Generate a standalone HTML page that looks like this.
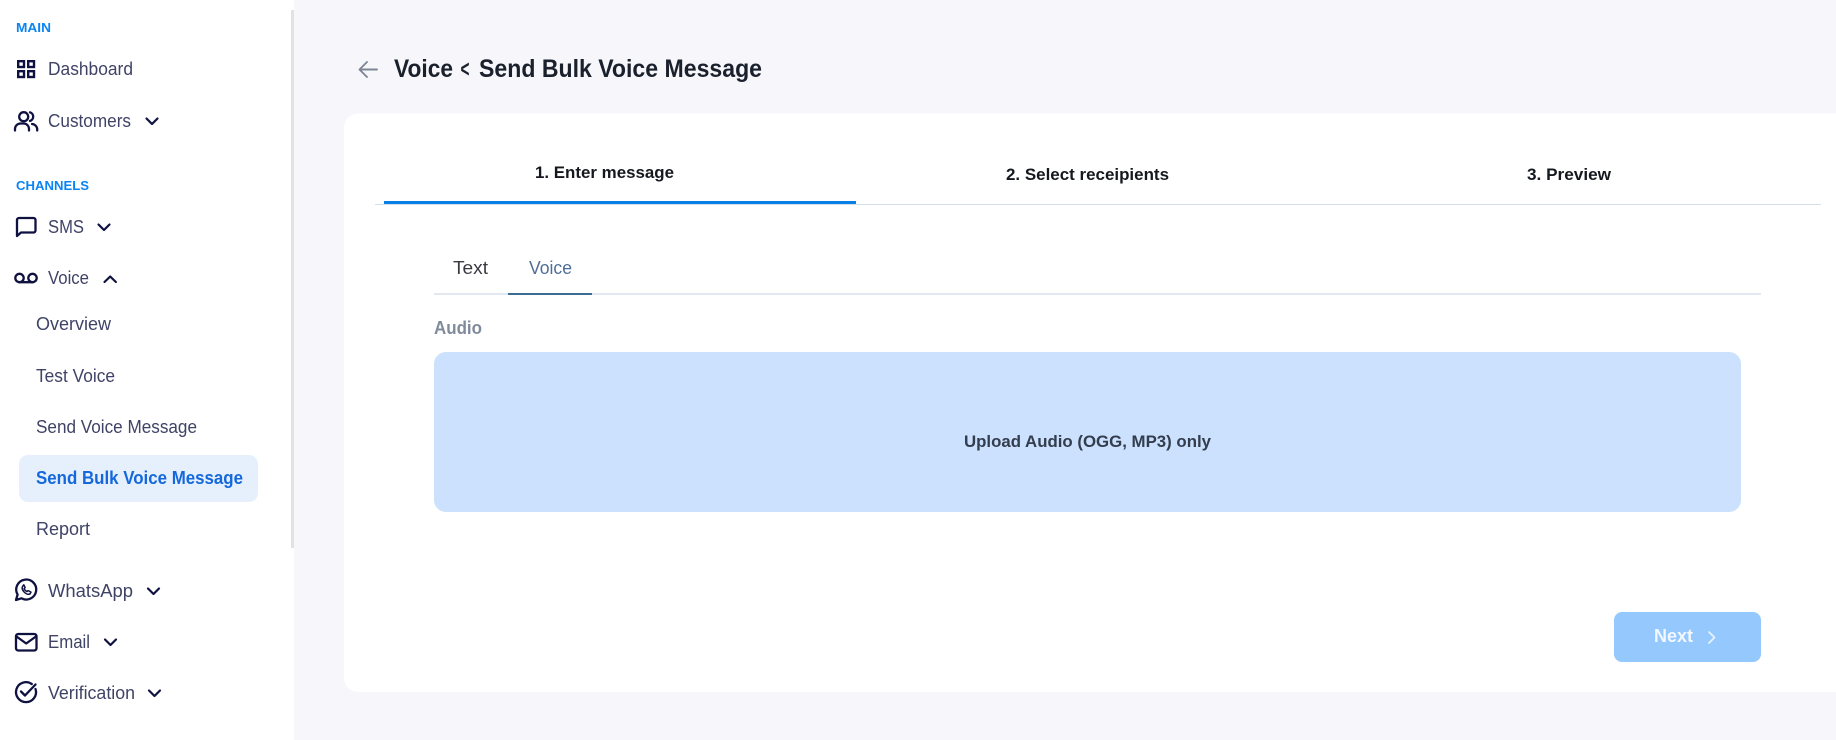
<!DOCTYPE html>
<html lang="en">
<head>
<meta charset="utf-8">
<title>Voice - Send Bulk Voice Message</title>
<style>
html,body{margin:0;padding:0;width:1836px;height:740px;overflow:hidden;background:#f7f7fb}
svg{display:block}
text{font-family:"Liberation Sans",sans-serif}
.nav{font-size:18px;fill:#3f4366}
.sec{font-size:12.5px;font-weight:700;fill:#0b84f3}
.tab{font-size:17px;font-weight:700;fill:#15181e}
.ic{fill:none;stroke:#0f1240;stroke-width:2.3;stroke-linecap:round;stroke-linejoin:round}
</style>
</head>
<body>
<svg width="1836" height="740" viewBox="0 0 1836 740" xmlns="http://www.w3.org/2000/svg">
<rect width="1836" height="740" fill="#f7f7fb"/>
<rect width="294" height="740" fill="#fff"/>
<rect x="291" y="10" width="3" height="538" fill="#e2e2e6"/>

<text class="sec" x="16" y="32" textLength="35" lengthAdjust="spacingAndGlyphs">MAIN</text>
<text class="nav" x="48" y="75" textLength="85" lengthAdjust="spacingAndGlyphs">Dashboard</text>
<text class="nav" x="48" y="127" textLength="83" lengthAdjust="spacingAndGlyphs">Customers</text>
<text class="sec" x="16" y="190" textLength="73" lengthAdjust="spacingAndGlyphs">CHANNELS</text>
<text class="nav" x="48" y="233" textLength="36" lengthAdjust="spacingAndGlyphs">SMS</text>
<text class="nav" x="48" y="284" textLength="41" lengthAdjust="spacingAndGlyphs">Voice</text>
<text class="nav" x="36" y="330" textLength="75" lengthAdjust="spacingAndGlyphs">Overview</text>
<text class="nav" x="36" y="382" textLength="79" lengthAdjust="spacingAndGlyphs">Test Voice</text>
<text class="nav" x="36" y="433" textLength="161" lengthAdjust="spacingAndGlyphs">Send Voice Message</text>
<rect x="19" y="455" width="239" height="47" rx="9" fill="#e6f0fc"/>
<text x="36" y="484" font-size="18" font-weight="700" fill="#1468dc" textLength="207" lengthAdjust="spacingAndGlyphs">Send Bulk Voice Message</text>
<text class="nav" x="36" y="535" textLength="54" lengthAdjust="spacingAndGlyphs">Report</text>
<text class="nav" x="48" y="597" textLength="85" lengthAdjust="spacingAndGlyphs">WhatsApp</text>
<text class="nav" x="48" y="648" textLength="42" lengthAdjust="spacingAndGlyphs">Email</text>
<text class="nav" x="48" y="699" textLength="87" lengthAdjust="spacingAndGlyphs">Verification</text>

<g class="ic">
<g stroke-linejoin="miter" stroke-width="2.400">
<rect x="18.200" y="61.200" width="5.800" height="5.800"/><rect x="28.200" y="61.200" width="5.800" height="5.800"/>
<rect x="18.200" y="71.200" width="5.800" height="5.800"/><rect x="28.200" y="71.200" width="5.800" height="5.800"/>
</g>
<circle cx="23.700" cy="116.700" r="4.500"/>
<path d="M15 130.500v-1.500a5.500 5.500 0 0 1 5.500-5.500h3.500a5.500 5.500 0 0 1 5 5.500v1.500"/>
<path d="M30 112.300a4.500 4.500 0 0 1 0 8.600M32 124a5.500 5.500 0 0 1 5.200 5v1.500"/>
<path d="M17 236V220a2 2 0 0 1 2-2h14.500a2 2 0 0 1 2 2v10.500a2 2 0 0 1-2 2H21z"/>
<circle cx="19.500" cy="278" r="4.200"/><circle cx="32.500" cy="278" r="4.200"/>
<path d="M19.500 282.200h13"/>
<path d="M16 600l1.600-5.400a10 10 0 1 1 3.800 3.700z"/>
<path d="M22.500 586.500c-.8 1.800 0 3.800 1.700 5.600 1.800 1.800 3.900 2.700 5.800 1.800l1-1.800-2.800-1.500-1.200 1c-1.200-.5-2.300-1.600-2.900-2.900l1-1.200-1.300-2.700z" stroke-width="1.500"/>
<rect x="16" y="634" width="20.500" height="16.500" rx="2.200"/>
<path d="M16.500 636.500l9.700 7 9.700-7"/>
<path d="M35.500 689a10 10 0 1 1-3.700-5"/>
<path d="M21 691.500l4 4 10.500-11"/>
</g>
<g fill="none" stroke="#0f1240" stroke-width="2.200" stroke-linecap="round" stroke-linejoin="round">
<path d="M146.500 118.500l5.500 5.500 5.500-5.500"/>
<path d="M98.500 224.500l5.500 5.500 5.500-5.500"/>
<path d="M104.500 282l5.700-5.500 5.700 5.500"/>
<path d="M148 588.500l5.500 5.500 5.500-5.500"/>
<path d="M105 639.500l5.500 5.500 5.500-5.500"/>
<path d="M149 690.500l5.500 5.500 5.500-5.500"/>
</g>

<path d="M377 69.500H360M367 62L359.500 69.500l7.500 7.500" fill="none" stroke="#7d8697" stroke-width="1.900" stroke-linecap="round" stroke-linejoin="round"/>
<text x="394" y="77" font-size="25" font-weight="700" fill="#1a202c" textLength="59" lengthAdjust="spacingAndGlyphs">Voice</text>
<text x="460.500" y="77" font-size="24" font-weight="700" fill="#1a202c" textLength="9" lengthAdjust="spacingAndGlyphs">&lt;</text>
<text x="479" y="77" font-size="25" font-weight="700" fill="#1a202c" textLength="283" lengthAdjust="spacingAndGlyphs">Send Bulk Voice Message</text>

<path d="M1836 113.500H358a14 14 0 0 0-14 14V678a14 14 0 0 0 14 14H1836z" fill="#fff"/>

<text class="tab" x="535" y="178" textLength="139" lengthAdjust="spacingAndGlyphs">1. Enter message</text>
<text class="tab" x="1006" y="180" textLength="163" lengthAdjust="spacingAndGlyphs">2. Select receipients</text>
<text class="tab" x="1527" y="180" textLength="84" lengthAdjust="spacingAndGlyphs">3. Preview</text>
<rect x="375" y="204" width="1446" height="1" fill="#d3dfea"/>
<rect x="384" y="201" width="472" height="3" fill="#0b7fe8"/>

<text x="453" y="274" font-size="18" fill="#3b3a40" textLength="35" lengthAdjust="spacingAndGlyphs">Text</text>
<text x="529" y="274" font-size="18" fill="#4f6e96" textLength="43" lengthAdjust="spacingAndGlyphs">Voice</text>
<rect x="434" y="293" width="1327" height="2" fill="#e2e8f0"/>
<rect x="508" y="293" width="84" height="2" fill="#3b6c94"/>

<text x="434" y="334" font-size="18" font-weight="700" fill="#7f8a9b" textLength="48" lengthAdjust="spacingAndGlyphs">Audio</text>
<rect x="434" y="352" width="1307" height="160" rx="12" fill="#cbe1fd"/>
<text x="964" y="447" font-size="17" font-weight="700" fill="#333d4e" textLength="247" lengthAdjust="spacingAndGlyphs">Upload Audio (OGG, MP3) only</text>

<rect x="1614" y="612" width="147" height="50" rx="8" fill="#95c8fd"/>
<text x="1654" y="642" font-size="18" font-weight="700" fill="#f2f8ff" textLength="39" lengthAdjust="spacingAndGlyphs">Next</text>
<path d="M1709 632l5.500 5.500-5.500 5.500" fill="none" stroke="#e8f3ff" stroke-width="1.700" stroke-linecap="round" stroke-linejoin="round"/>
</svg>
</body>
</html>
